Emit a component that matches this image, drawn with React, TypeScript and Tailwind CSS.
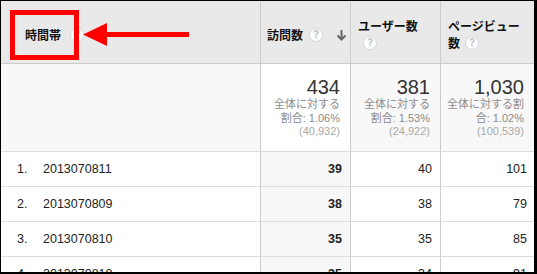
import React from "react";

const rows = [
  { idx: "1.", hour: "2013070811", visits: "39", users: "40", views: "101" },
  { idx: "2.", hour: "2013070809", visits: "38", users: "38", views: "79" },
  { idx: "3.", hour: "2013070810", visits: "35", users: "35", views: "85" },
  { idx: "4.", hour: "2013070818", visits: "35", users: "34", views: "91" },
];

const summary = [
  { total: "434", lines: ["全体に対する", "割合: 1.06%", "(40,932)"], bg: "bg-white" },
  { total: "381", lines: ["全体に対する", "割合: 1.53%", "(24,922)"], bg: "bg-[#f8f8f8]" },
  { total: "1,030", lines: ["全体に対する割", "合: 1.02%", "(100,539)"], bg: "bg-[#f8f8f8]" },
];

const jp = "font-['Noto_Sans_CJK_JP','Liberation_Sans',sans-serif]";
const num = "font-['Liberation_Sans','Noto_Sans_CJK_JP',sans-serif]";

const Help = ({ className = "" }: { className?: string }) => (
  <span
    className={`inline-flex h-[14px] w-[14px] shrink-0 items-center justify-center rounded-full border border-[#d6d6d6] bg-white text-[10px] font-bold leading-none text-[#bdbdbd] ${num} ${className}`}
  >
    ?
  </span>
);

const App: React.FC = () => {
  return (
    <div className="relative h-[274px] w-[537px] overflow-hidden border-t border-r-[3px] border-b-2 border-l border-black bg-white">
      <div className="grid grid-cols-[260px_90px_90px_93px]">
        {/* header */}
        <div className={`flex h-[63px] items-center border-r border-b border-[#cccccc] bg-[#e9e9e9] pt-[6px] pl-[24px] text-[12px] font-bold text-[#111] ${jp}`}>
          <span>時間帯</span>
          <Help className="ml-[9px]" />
        </div>
        <div className={`flex h-[63px] items-center border-r border-b border-[#cccccc] bg-[#e9e9e9] pt-[6px] pr-[3px] pl-[6px] text-[12px] font-bold text-[#111] ${jp}`}>
          <span>訪問数</span>
          <Help className="ml-[6px]" />
          <svg className="ml-auto" width="11" height="12" viewBox="0 0 11 12">
            <path d="M5.5 1v9M1.5 6.5l4 4 4-4" fill="none" stroke="#666" strokeWidth="2" />
          </svg>
        </div>
        <div className={`h-[63px] border-r border-b border-[#cccccc] bg-[#e9e9e9] pt-[16px] pl-[7px] text-[12px] leading-[17px] font-bold text-[#111] ${jp}`}>
          <div>ユーザー数</div>
          <div className="flex h-[17px] items-center">
            <Help className="ml-[5px]" />
          </div>
        </div>
        <div className={`h-[63px] border-b border-[#cccccc] bg-[#e9e9e9] pt-[16px] pl-[7px] text-[12px] leading-[17px] font-bold text-[#111] ${jp}`}>
          <div>ページビュー</div>
          <div className="flex h-[17px] items-center">
            <span>数</span>
            <Help className="ml-[5px]" />
          </div>
        </div>

        {/* summary */}
        <div className="h-[88px] border-r border-b border-r-[#cccccc] border-b-[#dddddd] bg-[#f8f8f8]" />
        {summary.map((s, i) => (
          <div
            key={s.total}
            className={`h-[88px] border-b border-b-[#dddddd] ${i < 2 ? "border-r border-r-[#cccccc]" : ""} ${s.bg} pt-[12px] pr-[10px] text-right`}
          >
            <div className={`text-[20px] leading-[22px] text-[#333] ${num}`}>{s.total}</div>
            {s.lines.map((l, j) => (
              <div
                key={l}
                className={`text-[11px] leading-[13.5px] whitespace-nowrap ${j === 2 ? "text-[#a9a9a9]" : "text-[#8c8c8c]"} ${num}`}
              >
                {l}
              </div>
            ))}
          </div>
        ))}

        {/* data rows */}
        {rows.map((r) => (
          <React.Fragment key={r.idx}>
            <div className={`flex h-[35px] items-center border-r border-b border-r-[#cccccc] border-b-[#dddddd] bg-white pl-[16px] text-[12.5px] text-[#222] ${num}`}>
              <span className="w-[26px]">{r.idx}</span>
              <span>{r.hour}</span>
            </div>
            <div className={`flex h-[35px] items-center justify-end border-r border-b border-r-[#cccccc] border-b-[#dddddd] bg-[#f7f7f7] pr-[8px] text-[12.5px] font-bold text-[#222] ${num}`}>
              {r.visits}
            </div>
            <div className={`flex h-[35px] items-center justify-end border-r border-b border-r-[#cccccc] border-b-[#dddddd] bg-white pr-[8px] text-[12.5px] text-[#222] ${num}`}>
              {r.users}
            </div>
            <div className={`flex h-[35px] items-center justify-end border-b border-b-[#dddddd] bg-white pr-[7px] text-[12.5px] text-[#222] ${num}`}>
              {r.views}
            </div>
          </React.Fragment>
        ))}
      </div>

      {/* annotation: red box and arrow */}
      <div className="absolute top-[9px] left-[9px] h-[50px] w-[69px] border-[5px] border-[#ff0000]" />
      <svg className="absolute top-0 left-0" width="200" height="60" viewBox="0 0 200 60">
        <rect x="100" y="31" width="88" height="5" fill="#ff0000" />
        <polygon points="82,33.5 106,22 106,45" fill="#ff0000" />
      </svg>
    </div>
  );
};

export default App;
